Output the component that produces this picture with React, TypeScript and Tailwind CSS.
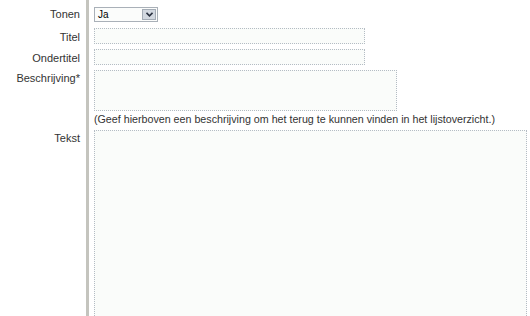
import React from "react";

const font = { fontFamily: '"Liberation Sans", Arial, sans-serif' };

function Label({ children, pt }: { children: React.ReactNode; pt: string }) {
  return (
    <div className={`w-[86px] shrink-0 pr-[6px] text-right text-[11px] leading-[13px] text-[#333333] ${pt}`}>
      {children}
    </div>
  );
}

function Cell({ children, className = "" }: { children?: React.ReactNode; className?: string }) {
  return (
    <div className={`flex-1 border-l-[3px] border-[#c4c4be] pl-[5px] ${className}`}>{children}</div>
  );
}

export default function App() {
  return (
    <div className="w-[530px] h-[316px] overflow-hidden bg-white" style={font}>
      <div className="flex">
        <Label pt="pt-[8px]">Tonen</Label>
        <Cell className="pt-[7px]">
          <div className="flex h-[15px] w-[64px] items-center border border-[#a9b0b8] bg-[#fbfcfb]">
            <span className="flex-1 pl-[3px] text-[10px] leading-[13px] text-black">Ja</span>
            <div className="mr-[1px] flex h-[11px] w-[14px] items-center justify-center border border-[#a4acb6] bg-[#d2d8e0]">
              <svg width="7" height="5" viewBox="0 0 7 5">
                <path d="M0.5 0.8 L3.5 3.8 L6.5 0.8" fill="none" stroke="#2a3140" strokeWidth="1.6" />
              </svg>
            </div>
          </div>
        </Cell>
      </div>
      <div className="flex">
        <Label pt="pt-[9px]">Titel</Label>
        <Cell className="pt-[6px]">
          <div className="h-[16px] w-[271px] border border-dotted border-[#b4bcc4] bg-[#fafcfa]" />
        </Cell>
      </div>
      <div className="flex">
        <Label pt="pt-[8px]">Ondertitel</Label>
        <Cell className="pt-[5px]">
          <div className="h-[16px] w-[271px] border border-dotted border-[#b4bcc4] bg-[#fafcfa]" />
        </Cell>
      </div>
      <div className="flex">
        <Label pt="pt-[7px]">Beschrijving*</Label>
        <Cell className="pt-[5px]">
          <div className="h-[41px] w-[303px] border border-dotted border-[#b4bcc4] bg-[#fafcfa]" />
          <div className="pt-[1px] text-[10.7px] leading-[14px] text-[#333333] whitespace-nowrap">
            (Geef hierboven een beschrijving om het terug te kunnen vinden in het lijstoverzicht.)
          </div>
        </Cell>
      </div>
      <div className="flex">
        <Label pt="pt-[6px]">Tekst</Label>
        <Cell className="pt-[4px] h-[200px]">
          <div className="h-[220px] w-[433px] border border-dotted border-[#b4bcc4] bg-[#fafcfa]" />
        </Cell>
      </div>
    </div>
  );
}
